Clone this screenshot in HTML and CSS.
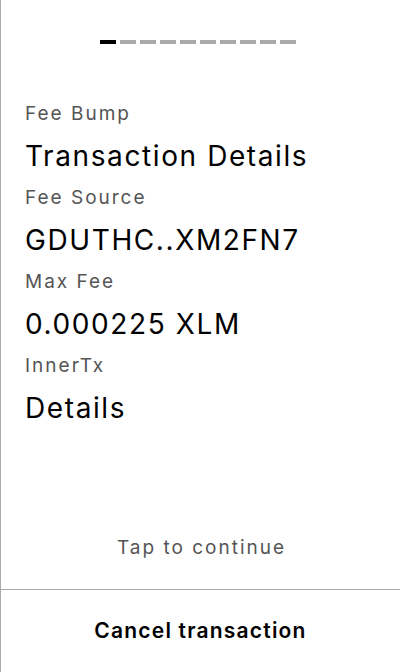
FILE: index.html
```html
<!DOCTYPE html>
<html>
<head>
<meta charset="utf-8">
<link rel="stylesheet" href="styles.css">
</head>
<body>
<div class="screen">
  <div class="main">
    <div class="progress">
      <span class="dash active"></span>
      <span class="dash"></span>
      <span class="dash"></span>
      <span class="dash"></span>
      <span class="dash"></span>
      <span class="dash"></span>
      <span class="dash"></span>
      <span class="dash"></span>
      <span class="dash"></span>
      <span class="dash"></span>
    </div>
    <div class="fields">
      <div class="label">Fee Bump</div>
      <div class="value">Transaction Details</div>
      <div class="label">Fee Source</div>
      <div class="value">GDUTHC..XM2FN7</div>
      <div class="label">Max Fee</div>
      <div class="value">0.000225 XLM</div>
      <div class="label">InnerTx</div>
      <div class="value">Details</div>
    </div>
    <div class="tap">Tap to continue</div>
  </div>
  <div class="cancel">Cancel transaction</div>
</div>
</body>
</html>
```

FILE: styles.css
```css
html, body {
  margin: 0;
  padding: 0;
  background: #fff;
}
body {
  font-family: Inter, "Noto Sans", sans-serif;
}
.screen {
  width: 400px;
  height: 672px;
  box-sizing: border-box;
  border-left: 1px solid #aaaaaa;
  display: flex;
  flex-direction: column;
}
.main {
  flex: 1;
  display: flex;
  flex-direction: column;
}
.progress {
  display: flex;
  gap: 4px;
  justify-content: center;
  padding-top: 40px;
  padding-right: 5px;
}
.dash {
  width: 16px;
  height: 4px;
  background: #aaaaaa;
}
.dash.active {
  background: #000;
}
.fields {
  padding: 56px 0 0 24px;
  display: flex;
  flex-direction: column;
}
.label {
  font-size: 19px;
  letter-spacing: 2px;
  line-height: 28px;
  color: #555555;
  height: 28px;
}
.value {
  font-size: 28px;
  letter-spacing: 1.6px;
  line-height: 56px;
  height: 56px;
  color: #000;
  white-space: nowrap;
}
.tap {
  margin-top: auto;
  text-align: center;
  font-size: 19px;
  letter-spacing: 2px;
  padding-left: 2px;
  color: #555555;
  padding-bottom: 30px;
}
.cancel {
  border-top: 1px solid #aaaaaa;
  height: 83px;
  padding-bottom: 2px;
  box-sizing: border-box;
  display: flex;
  align-items: center;
  justify-content: center;
  font-size: 21px;
  letter-spacing: 1.2px;
  font-weight: 600;
  color: #000;
}
```
